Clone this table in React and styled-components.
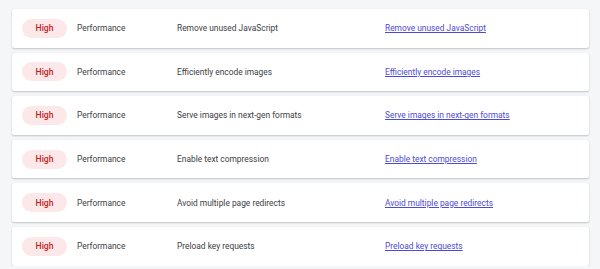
import React from "react";
import styled, { createGlobalStyle } from "styled-components";

const Global = createGlobalStyle`
  html, body { margin: 0; padding: 0; background: #f4f6f8; }
  body { font-family: Roboto, "Noto Sans", Arial, sans-serif; }
`;

const List = styled.div`
  display: flex;
  flex-direction: column;
  gap: 5px;
  padding: 9px 11px 0 12px;
`;

const Card = styled.div`
  display: grid;
  grid-template-columns: 55px 100px 208px 1fr;
  align-items: center;
  height: 38.6px;
  padding-left: 10px;
  background: #ffffff;
  border-radius: 2px;
  box-shadow: 0 1px 2px rgba(0, 0, 0, 0.2), 0 0 1px rgba(0, 0, 0, 0.1);
  box-sizing: border-box;
  line-height: 12px;
  font-size: 8.4px;
`;

const Badge = styled.span`
  display: flex;
  align-items: center;
  justify-content: center;
  width: 45px;
  height: 19px;
  border-radius: 10px;
  background: ${(p) => (p.$level === "High" ? "#fce8e8" : "#e8f0fe")};
  color: ${(p) => (p.$level === "High" ? "#c5221f" : "#1a73e8")};
  font-size: 8.6px;
  font-weight: 500;
`;

const Cell = styled.div`
  color: #3c4043;
  white-space: nowrap;
`;

const LinkCell = styled.div`
  white-space: nowrap;
`;

const Link = styled.a`
  color: #4b4bd6;
  text-decoration: underline;
`;

const rows = [
  "Remove unused JavaScript",
  "Efficiently encode images",
  "Serve images in next-gen formats",
  "Enable text compression",
  "Avoid multiple page redirects",
  "Preload key requests",
];

export default function App() {
  return (
    <>
      <Global />
      <List>
        {rows.map((r) => (
          <Card key={r}>
            <Badge $level="High">High</Badge>
            <Cell>Performance</Cell>
            <Cell>{r}</Cell>
            <LinkCell>
              <Link href="#">{r}</Link>
            </LinkCell>
          </Card>
        ))}
      </List>
    </>
  );
}
